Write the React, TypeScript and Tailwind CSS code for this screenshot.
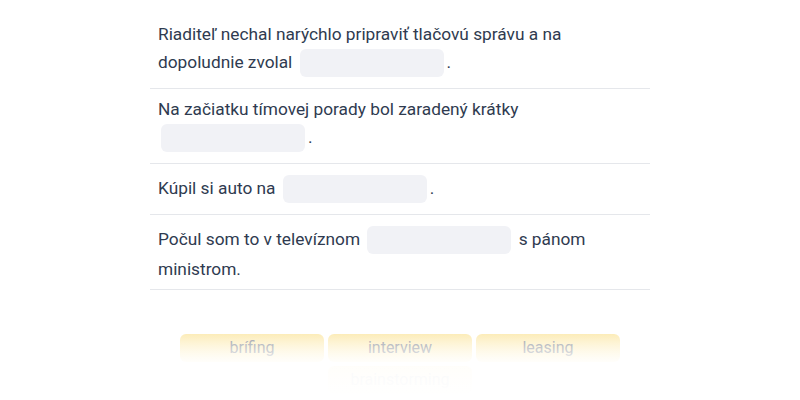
import React from 'react';

type Part = string | null;

const sentences: Part[][] = [
  ['Riaditeľ nechal narýchlo pripraviť tlačovú správu a na dopoludnie zvolal ', null, '.'],
  ['Na začiatku tímovej porady bol zaradený krátky ', null, '.'],
  ['Kúpil si auto na ', null, '.'],
  ['Počul som to v televíznom ', null, ' s pánom ministrom.'],
];

const words = ['brífing', 'interview', 'leasing', 'brainstorming'];

const Blank: React.FC = () => (
  <span className="inline-block align-middle w-[144px] h-[28px] my-[3px] mx-[3px] rounded-md bg-[#f1f2f6]" />
);

export default function App() {
  return (
    <div className="w-[800px] h-[400px] bg-white overflow-hidden" style={{ fontFamily: 'Roboto, "Noto Sans", sans-serif' }}>
      <div className="w-[500px] mx-auto pt-[14px]">
        {/* VETY */}
        <div className="divide-y divide-gray-200 border-b border-gray-200">
          {sentences.map((parts, i) => (
            <div key={i} className="px-2 py-2 text-[17.3px] leading-6 text-[#2f3b50]">
              {parts.map((p, j) => (p === null ? <Blank key={j} /> : <span key={j}>{p}</span>))}
            </div>
          ))}
        </div>

        {/* SLOVÁ */}
        <div className="relative mt-[44px]">
          <div className="w-[440px] mx-auto flex flex-wrap justify-center gap-1">
            {words.map((w) => (
              <div
                key={w}
                className="w-[144px] h-[28px] rounded-md bg-gradient-to-b from-[#fbe49a] to-[#fff4d0] flex items-center justify-center text-[16px] text-[#6f7582]"
              >
                {w}
              </div>
            ))}
          </div>
          <div className="absolute inset-x-0 top-0 h-[66px] bg-gradient-to-b from-white/30 via-white/95 via-45% to-white" />
        </div>
      </div>
    </div>
  );
}
